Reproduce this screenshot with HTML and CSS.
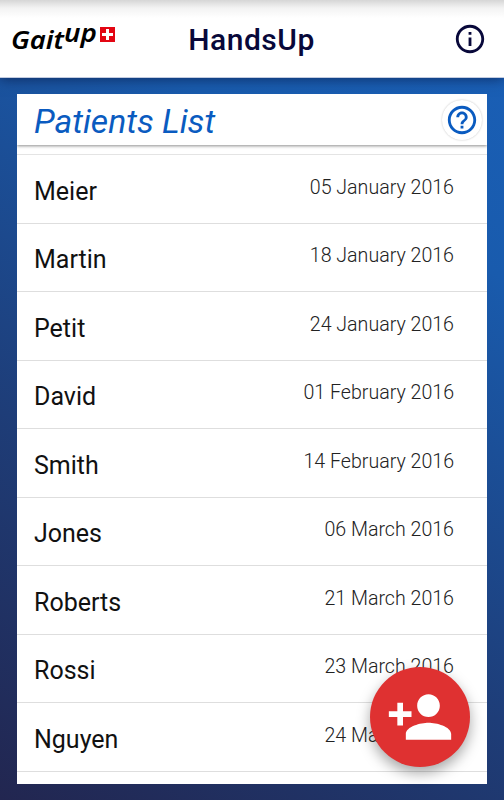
FILE: index.html
```html
<!DOCTYPE html>
<html lang="en">
<head>
    <meta charset="UTF-8">
    <meta name="viewport" content="width=device-width, initial-scale=1.0">
    <title>HandsUp</title>
    <link rel="stylesheet" href="styles.css">
</head>
<body>
    <header class="topbar">
        <div class="logo">
            <svg width="106" height="46" viewBox="0 -6 106 46">
                <text class="logo-text" x="0" y="28" textLength="53" lengthAdjust="spacingAndGlyphs">Gait</text>
                <text class="logo-text" x="53" y="21" textLength="33" lengthAdjust="spacingAndGlyphs">up</text>
                <rect x="89" y="6" width="15" height="15" fill="#e30613"/>
                <path d="M95 8h3v4h4v3h-4v4h-3v-4h-4v-3h4z" fill="#fff"/>
            </svg>
        </div>
        <h1>HandsUp</h1>
        <button class="icon-button" aria-label="Info">
            <svg width="34" height="34" viewBox="0 0 24 24" fill="#08083a">
                <path d="M11 17h2v-6h-2v6zm1-15C6.480 2 2 6.480 2 12s4.480 10 10 10 10-4.480 10-10S17.520 2 12 2zm0 18c-4.410 0-8-3.590-8-8s3.590-8 8-8 8 3.590 8 8-3.590 8-8 8zM11 9h2V7h-2v2z"/>
            </svg>
        </button>
    </header>

    <main class="panel">
        <div class="panel-header">
            <h2>Patients List</h2>
            <button class="help-button" aria-label="Help">
                <svg width="34" height="34" viewBox="0 0 24 24" fill="#0a5bc0">
                    <path d="M11 18h2v-2h-2v2zm1-16C6.480 2 2 6.480 2 12s4.480 10 10 10 10-4.480 10-10S17.520 2 12 2zm0 18c-4.410 0-8-3.590-8-8s3.590-8 8-8 8 3.590 8 8-3.590 8-8 8zm0-14c-2.210 0-4 1.790-4 4h2c0-1.100.9-2 2-2s2 .9 2 2c0 2-3 1.750-3 5h2c0-2.250 3-2.500 3-5 0-2.210-1.790-4-4-4z"/>
                </svg>
            </button>
        </div>
        <ul class="patients">
            <li><span class="name">Meier</span><span class="date">05 January 2016</span></li>
            <li><span class="name">Martin</span><span class="date">18 January 2016</span></li>
            <li><span class="name">Petit</span><span class="date">24 January 2016</span></li>
            <li><span class="name">David</span><span class="date">01 February 2016</span></li>
            <li><span class="name">Smith</span><span class="date">14 February 2016</span></li>
            <li><span class="name">Jones</span><span class="date">06 March 2016</span></li>
            <li><span class="name">Roberts</span><span class="date">21 March 2016</span></li>
            <li><span class="name">Rossi</span><span class="date">23 March 2016</span></li>
            <li><span class="name">Nguyen</span><span class="date">24 March 2016</span></li>
        </ul>
    </main>

    <button class="add-button" aria-label="Add patient">
        <svg width="68" height="68" viewBox="0 0 24 24" fill="#fff">
            <path d="M15 12c2.210 0 4-1.790 4-4s-1.790-4-4-4-4 1.790-4 4 1.790 4 4 4zm-9-2V7H4v3H1v2h3v3h2v-3h3v-2H6zm9 4c-2.670 0-8 1.340-8 4v2h16v-2c0-2.660-5.330-4-8-4z"/>
        </svg>
    </button>
</body>
</html>
```

FILE: styles.css
```css
* {
    box-sizing: border-box;
}

body {
    font-family: Roboto, sans-serif;
    display: flex;
    flex-direction: column;
    height: 800px;
    margin: 0;
    overflow: hidden;
    background: linear-gradient(212deg, #1a60b8 0%, #195bad 25%, #1e3d78 65%, #222650 100%);
}

h1, h2, ul {
    margin: 0;
    padding: 0;
    font-weight: normal;
}

button {
    display: flex;
    align-items: center;
    justify-content: center;
    padding: 0;
    border: none;
    background: none;
}

.topbar {
    display: grid;
    grid-template-columns: 120px 1fr 120px;
    align-items: center;
    flex: none;
    height: 78px;
    padding: 0 17px 0 11px;
    background: linear-gradient(#d6d6d6, #f3f3f3 8px, #fff 18px);
    border-bottom: 1px solid #c3cce0;
    box-shadow: 0 1px 12px rgba(0, 0, 30, 0.5);
}

.logo svg {
    display: block;
    margin-bottom: 1px;
}

.logo-text {
    font-family: "Noto Sans", sans-serif;
    font-size: 26px;
    font-weight: 600;
    font-style: italic;
}

.topbar h1 {
    padding: 2px 0 0 5px;
    font-size: 30px;
    font-weight: 500;
    letter-spacing: 0.5px;
    text-align: center;
    color: #08083a;
}

.icon-button {
    justify-self: end;
}

.panel {
    display: flex;
    flex-direction: column;
    flex: 1;
    margin: 16px 17px 16px 17px;
    background: #fff;
    overflow: hidden;
}

.panel-header {
    display: flex;
    align-items: center;
    justify-content: space-between;
    flex: none;
    height: 51px;
    padding: 0 5px 0 17px;
    box-shadow: 0 1px 3px rgba(0, 0, 0, 0.45);
}

.panel-header h2 {
    padding-top: 3px;
    font-size: 33.7px;
    font-style: italic;
    color: #0a5bc0;
}

.help-button {
    width: 40px;
    height: 40px;
    border-radius: 50%;
    box-shadow: 0 0 2px rgba(0, 0, 0, 0.25);
}

.patients {
    margin-top: 9px;
    border-top: 1px solid #e4e4e4;
    list-style: none;
}

.patients li {
    display: flex;
    justify-content: space-between;
    height: 68.56px;
    padding: 20.6px 33px 0 17px;
    border-bottom: 1px solid #dedede;
}

.name {
    font-size: 25px;
    line-height: 31px;
    color: #111;
}

.date {
    font-size: 19.6px;
    font-weight: 300;
    line-height: 24px;
    color: #222;
}

/* floating action button */
.add-button {
    position: absolute;
    right: 34px;
    bottom: 33px;
    width: 100px;
    height: 100px;
    border-radius: 50%;
    background: #df3131;
    box-shadow: 0 6px 14px rgba(0, 0, 0, 0.35);
}
```
